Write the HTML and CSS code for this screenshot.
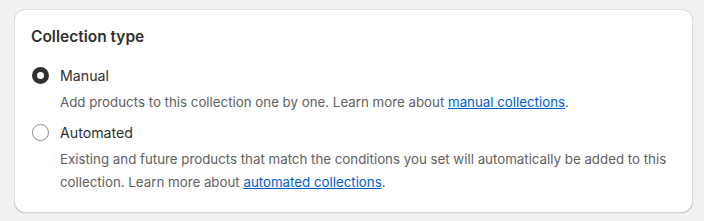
FILE: index.html
```html
<!DOCTYPE html>
<html>
	<head>
		<link rel="stylesheet" href="styles.css">
	</head>
	<body>
		<div class="card">
			<h2 class="card-title">Collection type</h2>
			<div class="choices">
				<label class="choice">
					<span class="radio checked"></span>
					<span class="choice-label">Manual</span>
				</label>
				<p class="help">
					Add products to this collection one by one. Learn more about
					<a href="#">manual collections</a>.
				</p>
				<label class="choice">
					<span class="radio"></span>
					<span class="choice-label">Automated</span>
				</label>
				<p class="help">
					Existing and future products that match the conditions you set will automatically be added to this
					collection. Learn more about <a href="#">automated collections</a>.
				</p>
			</div>
		</div>
	</body>
</html>
```

FILE: styles.css
```css
body {
	margin: 0;
	padding: 9px 11px 8px 14px;
	background: #f1f1f1;
	font-family: Inter, "Noto Sans", sans-serif;
	color: #303030;
}
.card {
	background: white;
	border-radius: 12px;
	padding: 18px 17px 19px;
	box-shadow: 0 1px 0 0 rgba(26, 26, 26, 0.07), 0 1px 0 0 rgba(204, 204, 204, 0.5) inset, 0 -1px 0 0 rgba(0, 0, 0, 0.17) inset, -1px 0 0 0 rgba(0, 0, 0, 0.13) inset, 1px 0 0 0 rgba(0, 0, 0, 0.13) inset;
}
.card-title {
	margin: 0 0 17px;
	font-size: 15.5px;
	font-weight: 600;
	line-height: 20px;
}
.choice {
	display: flex;
	align-items: center;
	gap: 11px;
	height: 22px;
}
.radio {
	width: 17px;
	height: 17px;
	box-sizing: border-box;
	border-radius: 50%;
	border: 1px solid #8a8a8a;
	margin-left: 1px;
}
.radio.checked {
	border: 5px solid #303030;
}
.choice-label {
	font-size: 14.2px;
}
.help {
	margin: 5px 0 7px 29px;
	font-size: 13.3px;
	line-height: 23px;
	color: #616161;
}
.help:last-child {
	margin-bottom: 0;
}
.help a {
	color: #005bd3;
}
```
